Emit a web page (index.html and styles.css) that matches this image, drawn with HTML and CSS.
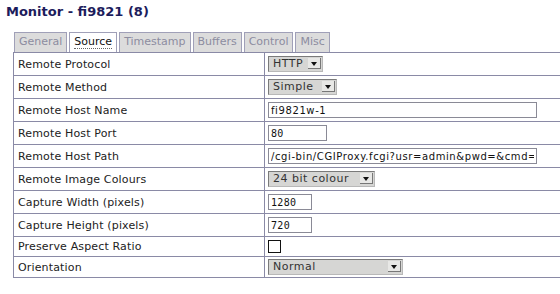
FILE: index.html
```html
<!DOCTYPE html>
<html lang="en">
<head>
    <meta charset="UTF-8">
    <title>Monitor - fi9821</title>
    <link rel="stylesheet" href="styles.css">
</head>
<body>
    <h2 class="title">Monitor - fi9821 (8)</h2>
    <div class="tabs">
        <span class="tab">General</span>
        <span class="tab active"><span class="focus">Source</span></span>
        <span class="tab">Timestamp</span>
        <span class="tab">Buffers</span>
        <span class="tab">Control</span>
        <span class="tab">Misc</span>
    </div>
    <table class="settings">
        <tbody>
            <tr>
                <td class="label">Remote Protocol</td>
                <td><span class="sel w-http"><select><option>HTTP</option></select></span></td>
            </tr>
            <tr>
                <td class="label">Remote Method</td>
                <td><span class="sel w-simple"><select><option>Simple</option></select></span></td>
            </tr>
            <tr>
                <td class="label">Remote Host Name</td>
                <td><input type="text" class="wide" value="fi9821w-1"></td>
            </tr>
            <tr>
                <td class="label">Remote Host Port</td>
                <td><input type="text" class="port" value="80"></td>
            </tr>
            <tr>
                <td class="label">Remote Host Path</td>
                <td><input type="text" class="wide" value="/cgi-bin/CGIProxy.fcgi?usr=admin&amp;pwd=&amp;cmd=snapPicture2"></td>
            </tr>
            <tr>
                <td class="label">Remote Image Colours</td>
                <td><span class="sel w-colour"><select><option>24 bit colour</option></select></span></td>
            </tr>
            <tr>
                <td class="label">Capture Width (pixels)</td>
                <td><input type="text" class="num" value="1280"></td>
            </tr>
            <tr>
                <td class="label">Capture Height (pixels)</td>
                <td><input type="text" class="num" value="720"></td>
            </tr>
            <tr class="short">
                <td class="label">Preserve Aspect Ratio</td>
                <td><span class="check"></span></td>
            </tr>
            <tr class="short last">
                <td class="label">Orientation</td>
                <td><span class="sel w-orient"><select><option>Normal</option></select></span></td>
            </tr>
        </tbody>
    </table>
</body>
</html>
```

FILE: styles.css
```css
html, body {
  margin: 0;
  background: #fff;
  overflow: hidden;
}

body {
  font-family: "DejaVu Sans", Verdana, sans-serif;
  font-size: 11px;
  color: #222;
  padding: 0 0 0 13px;
  inline-size: 547px;
}

.title {
  margin: 4px 0 0 -7px;
  font-size: 13px;
  font-weight: bold;
  color: #1c1c5c;
  line-height: 15px;
}

.tabs {
  display: flex;
  gap: 2px;
  margin-top: 13px;
  padding-left: 1px;
}

.tab {
  display: block;
  height: 19px;
  line-height: 18px;
  padding: 0 4px;
  border: 1px solid #a0a0b8;
  border-bottom: none;
  background: #dcdcdc;
  color: #8c8ca0;
}

.tab.active {
  background: #fff;
  color: #111;
}

.tab .focus {
  border-bottom: 1px dotted #666;
}

.settings {
  border-collapse: collapse;
  inline-size: 580px;
  border-top: 1px solid #8a8aa6;
}

.settings td {
  border: 1px solid #8a8aa6;
  height: 22px;
  padding: 0 3px;
  vertical-align: middle;
}

.settings .label {
  inline-size: 243px;
  padding-left: 4px;
  letter-spacing: 0.15px;
}

.settings tr.short td {
  height: 19px;
}

.settings tr.last td {
  height: 20px;
}

input[type="text"] {
  display: block;
  box-sizing: border-box;
  height: 16px;
  margin: 0;
  padding: 0 2px;
  border: 1px solid #8a8a96;
  font-family: "DejaVu Sans Mono", monospace;
  font-size: 10px;
  letter-spacing: 0.3px;
  color: #111;
  background: #fff;
}

input.wide {
  inline-size: 269px;
  font-family: "DejaVu Sans", sans-serif;
  letter-spacing: 0.6px;
}

input.port {
  inline-size: 59px;
}

input.num {
  inline-size: 44px;
}

.sel {
  position: relative;
  display: block;
  height: 16px;
}

.sel select {
  appearance: none;
  -webkit-appearance: none;
  display: block;
  box-sizing: border-box;
  inline-size: 100%;
  height: 16px;
  margin: 0;
  padding: 0 0 0 4px;
  border: 1px solid #7a7a7a;
  border-right-color: #b8b8b8;
  border-bottom-color: #b8b8b8;
  background: #d6d6d4;
  font-family: "DejaVu Sans", sans-serif;
  font-size: 11px;
  letter-spacing: 0.5px;
  color: #333;
  line-height: 14px;
}

/* arrow button */
.sel::after {
  content: "";
  position: absolute;
  top: 2px;
  right: 2px;
  inline-size: 12px;
  height: 10px;
  border-right: 1px solid #777;
  border-bottom: 1px solid #777;
  background: #e8e8e6;
  pointer-events: none;
}

/* down triangle */
.sel::before {
  content: "";
  position: absolute;
  z-index: 1;
  top: 6px;
  right: 6px;
  border-top: 4px solid #111;
  border-left: 3px solid transparent;
  border-right: 3px solid transparent;
  pointer-events: none;
}

.w-http { inline-size: 55px; }
.w-simple { inline-size: 69px; }
.w-colour { inline-size: 107px; }
.w-orient { inline-size: 135px; }

.check {
  display: block;
  inline-size: 11px;
  height: 11px;
  border: 1px solid #111;
  background: #fff;
}
```
